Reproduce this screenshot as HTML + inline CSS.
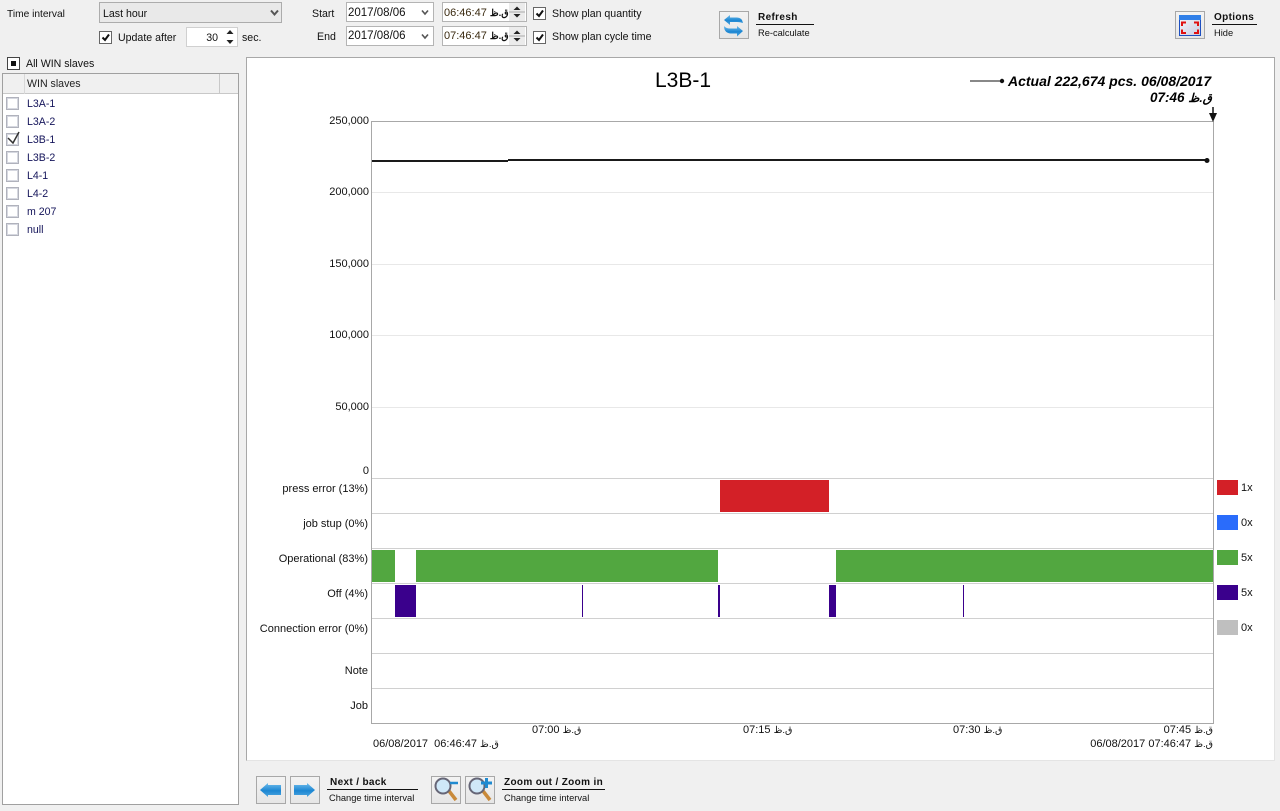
<!DOCTYPE html>
<html><head><meta charset="utf-8"><style>
html,body{margin:0;padding:0}
body{width:1280px;height:811px;overflow:hidden;position:relative;background:#f0f0f0;font-family:"Liberation Sans","Noto Sans CJK SC",sans-serif;font-size:10.6px;color:#111}
.a,.t{position:absolute;white-space:nowrap}
.t{line-height:13px}
.a{box-sizing:border-box}
.in{background:#fff;border:1px solid #b4b4b4}
.cb{position:absolute;width:13px;height:13px;box-sizing:border-box;border:1px solid #666;background:#fff}
.cb svg{position:absolute;left:0;top:0}
.lc{position:absolute;left:6px;width:13px;height:13px;box-sizing:border-box;border:1px solid #b0b2bc;background:#fff;box-shadow:inset 0 0 0 1px #d6d8e0}
.li{left:27px;color:#14145a}
.r{text-align:right}
.btn{position:absolute;width:30px;height:28px;box-sizing:border-box;border:1px solid #a8a8a8;background:linear-gradient(#f3f3f3,#e6e6e6)}
.btn svg{display:block}
.b{font-weight:bold;font-size:10px;letter-spacing:.35px}
.s{font-size:9.3px}
.hr{position:absolute;height:1px;background:#111}
.l{font-size:11px}
.ar{font-size:9.5px}
</style></head><body>

<div class="t" style="left:7px;top:8px;font-size:10.2px">Time interval</div>
<div class="a" style="left:99px;top:2px;width:183px;height:21px;background:#e9e9e9;border:1px solid #acacac"></div>
<div class="t" style="left:103px;top:8px">Last hour</div>
<svg class="a" style="left:270px;top:9px" width="10" height="8"><path d="M1 1.5 L4.5 5.5 L8 1.5" fill="none" stroke="#555" stroke-width="2"/></svg>

<div class="cb" style="left:99px;top:31px"><svg width="11" height="11"><path d="M2.5 5.5 L5 8 L9 2.5" fill="none" stroke="#111" stroke-width="2"/></svg></div>
<div class="t" style="left:118px;top:32px">Update after</div>
<div class="a in" style="left:186px;top:27px;width:52px;height:20px;border-color:#d0d0d0"></div>
<div class="t r" style="left:190px;top:32px;width:28px">30</div>
<svg class="a" style="left:224px;top:28px" width="12" height="18"><path d="M2.5 6 L6 2 L9.5 6Z M2.5 12 L6 16 L9.5 12Z" fill="#222"/></svg>
<div class="t" style="left:242px;top:32px">sec.</div>

<div class="t" style="left:312px;top:8px">Start</div>
<div class="t" style="left:317px;top:31px">End</div>
<div class="a in" style="left:346px;top:2px;width:88px;height:20px"></div>
<div class="a in" style="left:346px;top:26px;width:88px;height:20px"></div>
<div class="t" style="left:348px;top:7px;font-size:11.5px">2017/08/06</div>
<div class="t" style="left:348px;top:30px;font-size:11.5px">2017/08/06</div>
<svg class="a" style="left:421px;top:9px" width="10" height="8"><path d="M1 1.5 L4 5 L7 1.5" fill="none" stroke="#555" stroke-width="1.6"/></svg>
<svg class="a" style="left:421px;top:33px" width="10" height="8"><path d="M1 1.5 L4 5 L7 1.5" fill="none" stroke="#555" stroke-width="1.6"/></svg>
<div class="a in" style="left:442px;top:2px;width:85px;height:20px"></div>
<div class="a in" style="left:442px;top:26px;width:85px;height:20px"></div>
<div class="t" style="left:444px;top:7px;font-size:11px;color:#3a2a10">06:46:47 <span class="ar" style="color:#111;font-weight:bold">ق.ظ</span></div>
<div class="t" style="left:444px;top:30px;font-size:11px;color:#3a2a10">07:46:47 <span class="ar" style="color:#111;font-weight:bold">ق.ظ</span></div>
<svg class="a" style="left:509px;top:3px" width="17" height="18"><rect width="16" height="18" fill="#ebebeb"/><path d="M0 9H16" stroke="#aaa"/><path d="M4.5 7L8 3.5L11.5 7Z M4.5 11L8 14.5L11.5 11Z" fill="#222"/></svg>
<svg class="a" style="left:509px;top:27px" width="17" height="18"><rect width="16" height="18" fill="#ebebeb"/><path d="M0 9H16" stroke="#aaa"/><path d="M4.5 7L8 3.5L11.5 7Z M4.5 11L8 14.5L11.5 11Z" fill="#222"/></svg>

<div class="cb" style="left:533px;top:7px"><svg width="11" height="11"><path d="M2.5 5.5 L5 8 L9 2.5" fill="none" stroke="#111" stroke-width="2"/></svg></div>
<div class="t" style="left:552px;top:8px">Show plan quantity</div>
<div class="cb" style="left:533px;top:31px"><svg width="11" height="11"><path d="M2.5 5.5 L5 8 L9 2.5" fill="none" stroke="#111" stroke-width="2"/></svg></div>
<div class="t" style="left:552px;top:31px">Show plan cycle time</div>

<div class="btn" style="left:719px;top:11px"><svg width="28" height="26"><defs><linearGradient id="g" x1="0" y1="0" x2="0" y2="1"><stop offset="0" stop-color="#6fbcec"/><stop offset=".55" stop-color="#1c86d2"/><stop offset="1" stop-color="#4ea6e0"/></linearGradient></defs><path d="M4 8 L10 3 V5.5 H17 Q22 5.5 23 11 Q20 10 17 10 H10 V13Z" fill="url(#g)"/><path d="M23 19 L17 14 V16.5 H10 Q6 16.5 4 14 Q4 20.5 10 21.5 H17 V24.5Z" fill="url(#g)"/></svg></div>
<div class="t b" style="left:758px;top:11px">Refresh</div>
<div class="hr" style="left:756px;top:24px;width:58px"></div>
<div class="t s" style="left:758px;top:27px">Re-calculate</div>

<div class="btn" style="left:1175px;top:11px"><svg width="28" height="26"><defs><linearGradient id="w" x1="0" y1="0" x2="1" y2="1"><stop offset="0" stop-color="#f6f6fa"/><stop offset="1" stop-color="#c8cce0"/></linearGradient></defs><rect x="3.5" y="3.5" width="21" height="20" fill="url(#w)" stroke="#1d4fc0"/><rect x="3" y="3" width="22" height="5" fill="#2f7fe8"/><path d="M6 14V10.5H10M18 10.5H22V14M22 17.5V21H18M10 21H6V17.5" fill="none" stroke="#e01010" stroke-width="2"/></svg></div>
<div class="t b" style="left:1214px;top:11px">Options</div>
<div class="hr" style="left:1212px;top:24px;width:45px"></div>
<div class="t s" style="left:1214px;top:27px">Hide</div>

<div class="cb" style="left:7px;top:57px;border-color:#444"><div class="a" style="left:3px;top:3px;width:5px;height:5px;background:#111"></div></div>
<div class="t" style="left:26px;top:58px">All WIN slaves</div>

<div class="a" style="left:2px;top:73px;width:237px;height:732px;background:#fff;border:1px solid #a0a0a0"></div>
<div class="a" style="left:3px;top:74px;width:235px;height:20px;background:#f0f0f0;border-bottom:1px solid #c8c8c8"></div>
<div class="a" style="left:24px;top:74px;width:1px;height:20px;background:#d8d8d8"></div>
<div class="a" style="left:219px;top:74px;width:1px;height:20px;background:#c8c8c8"></div>
<div class="t" style="left:27px;top:78px;color:#222">WIN slaves</div>

<div class="lc" style="top:97px"></div><div class="t li" style="top:98px">L3A-1</div>
<div class="lc" style="top:115px"></div><div class="t li" style="top:116px">L3A-2</div>
<div class="lc" style="top:133px"></div><div class="t li" style="top:134px">L3B-1</div>
<svg class="a" style="left:6px;top:130px" width="15" height="16"><path d="M2 8 L7 13 L13 2" fill="none" stroke="#333" stroke-width="1.5"/></svg>
<div class="lc" style="top:151px"></div><div class="t li" style="top:152px">L3B-2</div>
<div class="lc" style="top:169px"></div><div class="t li" style="top:170px">L4-1</div>
<div class="lc" style="top:187px"></div><div class="t li" style="top:188px">L4-2</div>
<div class="lc" style="top:205px"></div><div class="t li" style="top:206px">m 207</div>
<div class="lc" style="top:223px"></div><div class="t li" style="top:224px">null</div>

<div class="a" style="left:246px;top:57px;width:1029px;height:704px;background:#fff;border:1px solid #a8a8a8;border-bottom-color:#e4e4e4"></div>
<div class="a" style="left:1274px;top:300px;width:1px;height:461px;background:#e4e4e4"></div>

<svg class="a" style="left:0;top:0" width="1280" height="811">
<g stroke="#e8e8e8"><path d="M372 192.5H1213M372 264.5H1213M372 335.5H1213M372 407.5H1213"/></g>
<g stroke="#d0d0d0"><path d="M371 478.5H1213M371 513.5H1213M371 548.5H1213M371 583.5H1213M371 618.5H1213M371 653.5H1213M371 688.5H1213"/></g>
<path d="M371.5 121.5H1213.5V723.5H371.5Z" fill="none" stroke="#a8a8a8"/>
<path d="M372 161H508" stroke="#1a1a1a" stroke-width="2"/>
<path d="M508 160H1207" stroke="#1a1a1a" stroke-width="2"/>
<circle cx="1207" cy="160.5" r="2.5" fill="#111"/>
<path d="M970 81H1002" stroke="#111"/><circle cx="1002" cy="81" r="2.2" fill="#111"/>
<path d="M1213 107V116" stroke="#111" stroke-width="1.5"/><path d="M1209 113H1217L1213 122Z" fill="#111"/>
<g fill="#d32027"><rect x="720" y="480" width="109" height="32"/><rect x="1217" y="480" width="21" height="15"/></g>
<rect x="1217" y="515" width="21" height="15" fill="#2a6cfb"/>
<g fill="#52a740"><rect x="372" y="550" width="23" height="32"/><rect x="416" y="550" width="302" height="32"/><rect x="836" y="550" width="377" height="32"/><rect x="1217" y="550" width="21" height="15"/></g>
<g fill="#3a008c"><rect x="395" y="585" width="21" height="32"/><rect x="582" y="585" width="1" height="32"/><rect x="718" y="585" width="2" height="32"/><rect x="829" y="585" width="7" height="32"/><rect x="963" y="585" width="1" height="32"/><rect x="1217" y="585" width="21" height="15"/></g>
<rect x="1217" y="620" width="21" height="15" fill="#bfbfbf"/>
</svg>

<div class="t" style="left:655px;top:70px;font-size:21px;line-height:22px;color:#000">L3B-1</div>
<div class="t" style="left:1008px;top:74px;font-size:14px;line-height:15px;font-style:italic;font-weight:bold;color:#000">Actual 222,674 pcs. 06/08/2017</div>
<div class="t r" style="left:1100px;top:90px;width:112px;font-size:13.5px;line-height:15px;font-style:italic;font-weight:bold;color:#000">07:46 <span style="font-size:12px">ق.ظ</span></div>

<div class="t r l" style="left:300px;top:115px;width:69px">250,000</div>
<div class="t r l" style="left:300px;top:186px;width:69px">200,000</div>
<div class="t r l" style="left:300px;top:258px;width:69px">150,000</div>
<div class="t r l" style="left:300px;top:329px;width:69px">100,000</div>
<div class="t r l" style="left:300px;top:401px;width:69px">50,000</div>
<div class="t r l" style="left:300px;top:465px;width:69px">0</div>

<div class="t r l" style="left:240px;top:483px;width:128px">press error (13%)</div>
<div class="t r l" style="left:240px;top:518px;width:128px">job stup (0%)</div>
<div class="t r l" style="left:240px;top:553px;width:128px">Operational (83%)</div>
<div class="t r l" style="left:240px;top:588px;width:128px">Off (4%)</div>
<div class="t r l" style="left:240px;top:623px;width:128px">Connection error (0%)</div>
<div class="t r l" style="left:240px;top:665px;width:128px">Note</div>
<div class="t r l" style="left:240px;top:700px;width:128px">Job</div>

<div class="t l" style="left:1241px;top:482px">1x</div>
<div class="t l" style="left:1241px;top:517px">0x</div>
<div class="t l" style="left:1241px;top:552px">5x</div>
<div class="t l" style="left:1241px;top:587px">5x</div>
<div class="t l" style="left:1241px;top:622px">0x</div>

<div class="t l" style="left:532px;top:724px">07:00 <span class="ar">ق.ظ</span></div>
<div class="t l" style="left:743px;top:724px">07:15 <span class="ar">ق.ظ</span></div>
<div class="t l" style="left:953px;top:724px">07:30 <span class="ar">ق.ظ</span></div>
<div class="t r l" style="left:1100px;top:724px;width:113px">07:45 <span class="ar">ق.ظ</span></div>
<div class="t l" style="left:373px;top:738px">06/08/2017&nbsp; 06:46:47 <span class="ar">ق.ظ</span></div>
<div class="t r l" style="left:1060px;top:738px;width:153px">06/08/2017 07:46:47 <span class="ar">ق.ظ</span></div>

<div class="btn" style="left:256px;top:776px"><svg width="28" height="26"><path d="M3 13 L11 6 V8 H24 V18 H11 V20Z" fill="url(#g)"/></svg></div>
<div class="btn" style="left:290px;top:776px"><svg width="28" height="26"><path d="M24 13 L16 6 V8 H3 V18 H16 V20Z" fill="url(#g)"/></svg></div>
<div class="t b" style="left:330px;top:776px">Next / back</div>
<div class="hr" style="left:327px;top:789px;width:91px"></div>
<div class="t s" style="left:329px;top:792px">Change time interval</div>

<div class="btn" style="left:431px;top:776px"><svg width="28" height="26"><path d="M17 14 L24 23" stroke="#c98a3a" stroke-width="3.5"/><circle cx="11" cy="9" r="7.5" fill="#cfe8f8" stroke="#667" stroke-width="2"/><path d="M18 6H26" stroke="#1f8ad0" stroke-width="2.5"/></svg></div>
<div class="btn" style="left:465px;top:776px"><svg width="28" height="26"><path d="M17 14 L24 23" stroke="#c98a3a" stroke-width="3.5"/><circle cx="11" cy="9" r="7.5" fill="#cfe8f8" stroke="#667" stroke-width="2"/><path d="M15 6H26M20.5 1V11" stroke="#1f8ad0" stroke-width="3"/></svg></div>
<div class="t b" style="left:504px;top:776px">Zoom out / Zoom in</div>
<div class="hr" style="left:502px;top:789px;width:103px"></div>
<div class="t s" style="left:504px;top:792px">Change time interval</div>

</body></html>
